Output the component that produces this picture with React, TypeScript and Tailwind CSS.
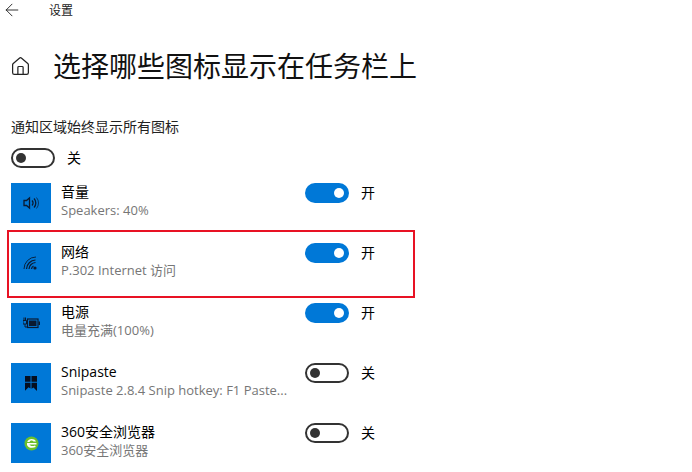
import React from 'react';
import { ArrowLeft, Home } from 'lucide-react';

const VolumeIcon = () => (
  <svg width="16" height="16" viewBox="0 0 16 16" fill="none" stroke="#0a1a30" strokeWidth="1.3">
    <path d="M1 5.500h2.500l3-2.500v10l-3-2.500h-2.500z" />
    <path d="M9 5.500a3.500 3.500 0 0 1 0 5" />
    <path d="M11 3.500a6.500 6.500 0 0 1 0 9" />
    <path d="M13.500 2.500a8.500 8.500 0 0 1 0 11" strokeWidth="0.7" />
  </svg>
);

const WifiIcon = () => (
  <svg width="16" height="16" viewBox="0 0 16 16" fill="none" stroke="#0a1a30" strokeWidth="1.2">
    <path d="M1 14a12 12 0 0 1 12-12" strokeWidth="0.9" />
    <path d="M3.500 14a9.500 9.500 0 0 1 9-9" />
    <path d="M6 14a7 7 0 0 1 6.500-6.500" />
    <path d="M8.500 14a4 4 0 0 1 2-3" />
    <circle cx="12" cy="13" r="1.600" fill="#0a1a30" stroke="none" />
  </svg>
);

const BatteryIcon = () => (
  <svg width="17" height="12" viewBox="0 0 17 12" fill="none">
    <rect x="4.500" y="2" width="10.500" height="8.500" stroke="#0a1a30" strokeWidth="1.200" />
    <rect x="6" y="3.500" width="7.500" height="5.500" fill="#0a1a30" />
    <rect x="15.500" y="4.500" width="1.500" height="3.500" fill="#0a1a30" />
    <path d="M0 3.500h3.500v3.500h-3.500z M1 0.500v3 M2.500 0.500v3 M2 7v3h2" stroke="#0a1a30" strokeWidth="1" />
  </svg>
);

const SnipasteIcon = () => (
  <svg width="12" height="15" viewBox="0 0 12 15" fill="#050f20">
    <path d="M0 0h5.500v5.800h-5.500z M6.500 0h5.500v5.800h-5.500z" />
    <path d="M0 6.800h5.500v5.700l-2-1.200-3.500 3.400z M6.500 6.800h5.500v8.100l-3.500-3.400-2 1.200z" />
  </svg>
);

const BrowserIcon = () => (
  <svg width="15" height="15" viewBox="0 0 15 15">
    <circle cx="7.500" cy="7.500" r="7" fill="#6cc02c" />
    <path d="M3 7h9.500v1.500h-7c.5 1.500 3 2 5.500 1l.8 1.500c-3.500 1.500-7.500 1-8.800-2z M3.200 6c1-3.500 7-4 8.800-.5h-2.500c-1-1.300-3-1.300-4 .5z" fill="#ffffff" />
  </svg>
);

const Toggle = ({ on }: { on: boolean }) => (
  <div className="flex h-5 items-center">
    {on ? (
      <div className="flex h-5 w-11 items-center justify-end rounded-full bg-[#0078d7] pr-[5px]">
        <div className="h-2.5 w-2.5 rounded-full bg-white" />
      </div>
    ) : (
      <div className="flex h-5 w-11 items-center rounded-full border-2 border-[#333333] bg-white pl-[3px]">
        <div className="h-2.5 w-2.5 rounded-full bg-[#333333]" />
      </div>
    )}
    <span className="ml-3 text-[14px] leading-5 text-black">{on ? '开' : '关'}</span>
  </div>
);

interface RowProps {
  icon: React.ReactNode;
  name: string;
  detail: string;
  on: boolean;
}

const rows: RowProps[] = [
  { icon: <VolumeIcon />, name: '音量', detail: 'Speakers: 40%', on: true },
  { icon: <WifiIcon />, name: '网络', detail: 'P.302 Internet 访问', on: true },
  { icon: <BatteryIcon />, name: '电源', detail: '电量充满(100%)', on: true },
  { icon: <SnipasteIcon />, name: 'Snipaste', detail: 'Snipaste 2.8.4 Snip hotkey: F1 Paste...', on: false },
  { icon: <BrowserIcon />, name: '360安全浏览器', detail: '360安全浏览器', on: false },
];

const Row = ({ icon, name, detail, on }: RowProps) => (
  <div className="flex h-10 items-start">
    <div className="flex h-10 w-10 shrink-0 items-center justify-center bg-[#0078d7]">{icon}</div>
    <div className="ml-2.5 w-[244px] shrink-0 -translate-y-px">
      <div className="text-[14px] leading-[19px] text-black">{name}</div>
      <div className="text-[13px] leading-[19px] whitespace-nowrap text-[#767676]">{detail}</div>
    </div>
    <Toggle on={on} />
  </div>
);

export default function App() {
  return (
    <div className="relative h-[472px] w-[692px] overflow-hidden bg-white font-['Open_Sans','Noto_Sans_CJK_SC',sans-serif]">
      <div className="flex h-5 items-center pl-[2px]">
        <ArrowLeft size={20} strokeWidth={1.1} className="text-[#222222]" />
        <span className="mt-[2px] ml-[27px] text-[12px] leading-5 text-[#222222]">设置</span>
      </div>

      <div className="mt-[26px] flex h-10 items-center pl-[10px]">
        <Home size={21} strokeWidth={1.4} className="text-[#222222]" />
        <h1 className="ml-[22px] text-[28px] leading-10 font-normal whitespace-nowrap text-[#111111]">
          选择哪些图标显示在任务栏上
        </h1>
      </div>

      <div className="mt-[31px] pl-[11px] text-[14px] leading-5 text-[#222222]">通知区域始终显示所有图标</div>

      <div className="mt-[11px] pl-[11px]">
        <Toggle on={false} />
      </div>

      <div className="mt-[15px] flex flex-col gap-5 pl-[11px]">
        {rows.map((row) => (
          <Row key={row.name} {...row} />
        ))}
      </div>

      {/* highlight drawn on top of the 网络 row */}
      <div className="absolute top-[230px] left-[7px] h-[68px] w-[408px] border-2 border-[#e81224]" />
    </div>
  );
}
